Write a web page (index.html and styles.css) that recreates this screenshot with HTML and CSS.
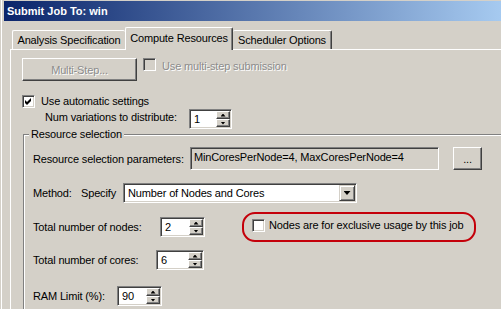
FILE: index.html
```html
<!DOCTYPE html>
<html lang="en">
<head>
  <meta charset="UTF-8">
  <title>Submit Job To: win</title>
  <link rel="stylesheet" href="styles.css">
</head>
<body>
  <div class="window">
    <div class="titlebar">Submit Job To: win</div>
    <div class="tabs">
      <div class="tab tab-first">Analysis Specification</div>
      <div class="tab active">Compute Resources</div>
      <div class="tab tab-last">Scheduler Options</div>
    </div>
    <div class="panel">
      <div class="row multi">
        <button class="btn btn-multi" disabled>Multi-Step...</button>
        <span class="check off"></span>
        <span class="muted">Use multi-step submission</span>
      </div>
      <div class="row auto">
        <span class="check">
          <svg width="7" height="7" viewBox="0 0 7 7"><path d="M0 2L2 4L6 0V3L2 7L0 5Z" fill="#000"/></svg>
        </span>
        <span class="check-text">Use automatic settings</span>
      </div>
      <div class="row variations">
        <span class="lbl lbl-var">Num variations to distribute:</span>
        <div class="spin w-var">
          <span class="spin-val">1</span>
          <div class="spin-btns"><span class="spin-up"></span><span class="spin-down"></span></div>
        </div>
      </div>
      <fieldset class="group">
        <legend>Resource selection</legend>
        <div class="row params">
          <span class="lbl lbl-params">Resource selection parameters:</span>
          <div class="field readonly">MinCoresPerNode=4, MaxCoresPerNode=4</div>
          <button class="btn btn-dots">...</button>
        </div>
        <div class="row method">
          <span class="lbl lbl-method">Method:</span>
          <span class="lbl lbl-specify">Specify</span>
          <div class="combo">
            <span class="combo-val">Number of Nodes and Cores</span>
            <span class="combo-btn"></span>
          </div>
        </div>
        <div class="row nodes">
          <span class="lbl lbl-nodes">Total number of nodes:</span>
          <div class="spin w-nodes">
            <span class="spin-val">2</span>
            <div class="spin-btns"><span class="spin-up"></span><span class="spin-down"></span></div>
          </div>
          <div class="highlight">
            <span class="check"></span>
            <span class="check-text">Nodes are for exclusive usage by this job</span>
          </div>
        </div>
        <div class="row cores">
          <span class="lbl lbl-cores">Total number of cores:</span>
          <div class="spin w-cores">
            <span class="spin-val">6</span>
            <div class="spin-btns"><span class="spin-up"></span><span class="spin-down"></span></div>
          </div>
        </div>
        <div class="row ram">
          <span class="lbl lbl-ram">RAM Limit (%):</span>
          <div class="spin w-ram">
            <span class="spin-val">90</span>
            <div class="spin-btns"><span class="spin-up"></span><span class="spin-down"></span></div>
          </div>
        </div>
      </fieldset>
    </div>
  </div>
</body>
</html>
```

FILE: styles.css
```css
body {
  margin: 0;
  background: #d4d0c8;
  font-family: "Liberation Sans", Arial, sans-serif;
  font-size: 11px;
  letter-spacing: -0.15px;
  color: #000;
  overflow: hidden;
  height: 309px;
}
.window {
  height: 309px;
  padding: 1px 0 0 4px;
  box-sizing: border-box;
  overflow: hidden;
  box-shadow: inset 1px 0 0 #d4d0c8, inset 2px 0 0 #fff;
}
.titlebar {
  height: 20px;
  line-height: 20px;
  padding-left: 3px;
  color: #fff;
  font-weight: bold;
  letter-spacing: 0;
  background: linear-gradient(to right, #0a246a, #a6caf0);
}
.tabs {
  display: flex;
  align-items: flex-end;
  margin-top: 6px;
  padding-left: 8px;
  height: 22px;
}
.tab {
  box-sizing: border-box;
  height: 19px;
  padding-top: 3px;
  line-height: 13px;
  text-align: center;
  border-top: 1px solid #fff;
  border-left: 1px solid #fff;
  border-right: 1px solid #404040;
  box-shadow: inset -1px 0 0 #808080;
  border-radius: 2px 2px 0 0;
  background: #d4d0c8;
}
.tab-first {
  width: 113px;
  border-right: none;
  box-shadow: none;
}
.tab.active {
  width: 108px;
  height: 23px;
  padding-top: 4px;
  margin-bottom: -1px;
  position: relative;
  z-index: 1;
}
.tab-last {
  width: 99px;
  border-left: none;
}
.panel {
  margin-left: 6px;
  border-top: 1px solid #fff;
  border-left: 1px solid #fff;
  padding: 8px 0 0 11px;
}
.row {
  display: flex;
}
.btn {
  font: inherit;
  letter-spacing: inherit;
  color: #000;
  background: #d4d0c8;
  border: 1px solid;
  border-color: #fff #404040 #404040 #fff;
  box-shadow: inset -1px -1px 0 #808080;
  padding: 0;
  box-sizing: border-box;
}
.btn-multi {
  width: 115px;
  height: 23px;
  color: #8c8c8c;
  text-shadow: 1px 1px 0 #fff;
}
.check {
  width: 13px;
  height: 13px;
  box-sizing: border-box;
  flex: none;
  background: #fff;
  border: 1px solid;
  border-color: #808080 #fff #fff #808080;
  box-shadow: inset 1px 1px 0 #404040, inset -1px -1px 0 #d4d0c8;
  display: flex;
  align-items: center;
  justify-content: center;
}
.check.off {
  background: #d4d0c8;
  margin-left: 6px;
}
.muted {
  margin-left: 6px;
  padding-top: 2px;
  line-height: 13px;
  color: #8c8c8c;
  text-shadow: 1px 1px 0 #fff;
}
.auto {
  margin-top: 14px;
  align-items: center;
}
.check-text {
  margin-left: 6px;
  line-height: 13px;
}
.variations {
  margin-top: 1px;
}
.lbl {
  flex: none;
  box-sizing: border-box;
  line-height: 20px;
}
.lbl-var {
  width: 167px;
  padding-left: 23px;
  line-height: 16px;
}
.spin {
  display: flex;
  height: 20px;
  box-sizing: border-box;
  background: #fff;
  border: 1px solid;
  border-color: #808080 #fff #fff #808080;
  box-shadow: inset 1px 1px 0 #404040, inset -1px -1px 0 #d4d0c8;
  padding: 1px;
}
.spin-val {
  flex: 1;
  line-height: 16px;
  padding-left: 3px;
}
.spin-btns {
  width: 14px;
  display: flex;
  flex-direction: column;
}
.spin-up, .spin-down {
  height: 8px;
  box-sizing: border-box;
  background: #d4d0c8;
  border: 1px solid;
  border-color: #fff #404040 #404040 #fff;
  box-shadow: inset -1px -1px 0 #808080;
  display: flex;
  align-items: center;
  justify-content: center;
}
.spin-up::after, .spin-down::after {
  content: "";
  width: 5px;
  height: 3px;
  background: #000;
}
.spin-up::after {
  clip-path: polygon(50% 0, 100% 100%, 0 100%);
}
.spin-down::after {
  clip-path: polygon(0 0, 100% 0, 50% 100%);
}
.w-var { width: 43px; }
.w-nodes { width: 45px; }
.w-cores { width: 48px; }
.w-ram { width: 45px; }
.group {
  margin: 0 -20px 0 1px;
  padding: 7px 0 12px 9px;
  border: 1px solid #808080;
  box-shadow: inset 1px 1px 0 #fff, 1px 1px 0 #fff;
}
.group legend {
  padding: 0 2px;
  margin-left: -4px;
  line-height: 11px;
  background: #d4d0c8;
}
.params {
  align-items: center;
}
.lbl-params { width: 157px; }
.field {
  width: 249px;
  height: 23px;
  box-sizing: border-box;
  line-height: 19px;
  padding-left: 3px;
  border: 1px solid;
  border-color: #808080 #fff #fff #808080;
  box-shadow: inset 1px 1px 0 #404040, inset -1px -1px 0 #d4d0c8;
}
.readonly {
  background: #d4d0c8;
}
.btn-dots {
  width: 29px;
  height: 23px;
  margin-left: 14px;
  line-height: 14px;
}
.method {
  margin-top: 13px;
  align-items: center;
}
.lbl-method { width: 48px; }
.lbl-specify { width: 42px; }
.combo {
  width: 234px;
  height: 20px;
  box-sizing: border-box;
  display: flex;
  background: #fff;
  border: 1px solid;
  border-color: #808080 #fff #fff #808080;
  box-shadow: inset 1px 1px 0 #404040, inset -1px -1px 0 #d4d0c8;
  padding: 1px;
}
.combo-val {
  flex: 1;
  line-height: 16px;
  padding-left: 3px;
}
.combo-btn {
  width: 16px;
  box-sizing: border-box;
  background: #d4d0c8;
  border: 1px solid;
  border-color: #d4d0c8 #404040 #404040 #d4d0c8;
  box-shadow: inset 1px 1px 0 #fff, inset -1px -1px 0 #808080;
  display: flex;
  align-items: center;
  justify-content: center;
}
.combo-btn::after {
  content: "";
  width: 7px;
  height: 4px;
  background: #000;
  clip-path: polygon(0 0, 100% 0, 50% 100%);
}
.nodes {
  margin-top: 9px;
  height: 30px;
  align-items: center;
}
.lbl-nodes { width: 127px; }
.highlight {
  width: 234px;
  height: 30px;
  box-sizing: border-box;
  margin-left: 37px;
  border: 2px solid #c4000a;
  border-radius: 13px;
  display: flex;
  align-items: center;
  padding: 0 0 3px 8px;
}
.highlight .check-text {
  margin-left: 4px;
}
.cores {
  margin-top: 8px;
  align-items: center;
}
.lbl-cores { width: 123px; }
.ram {
  margin-top: 16px;
  align-items: center;
}
.lbl-ram { width: 84px; }
```
